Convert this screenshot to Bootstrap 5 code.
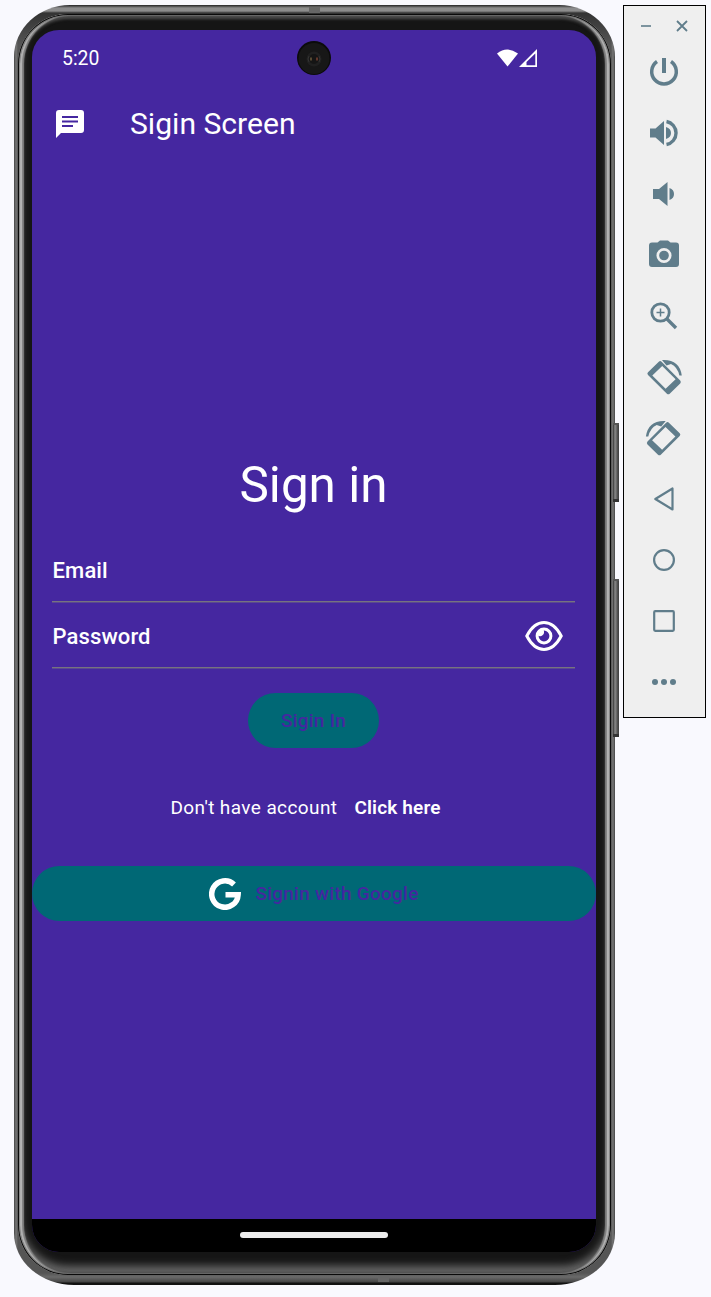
<!DOCTYPE html>
<html lang="en">
<head>
<meta charset="utf-8">
<meta name="viewport" content="width=device-width, initial-scale=1">
<title>Sign in</title>
<link href="https://cdn.jsdelivr.net/npm/bootstrap@5.3.0/dist/css/bootstrap.min.css" rel="stylesheet">
<style>
body{background:#f9f9fe;font-family:Roboto,sans-serif;width:711px;height:1297px;overflow:hidden}
.stage{padding:5px 5px 0 14px;gap:8px}
.phone{width:601px;height:1280px;padding:9px 4px 10px;border-radius:56px 56px 60px 60px / 52px 52px 52px 52px;flex:none;
 background:linear-gradient(#222 0,#444 1px,#8c8c8c 3px,#8c8c8c 6px,#333 8px,transparent 40px,transparent 1240px,#555 1268px,#6a6a6a 1272px,#444 1277px,#111 1278px),linear-gradient(90deg,#444 0,#777 2px,#555 4px,#555 597px,#777 599px,#444 601px)}
.glass{height:1261px;border-radius:50px;padding:16px 15px 17px 14px;background:#151515;
 box-shadow:inset 0 0 0 1px #0a0a0a,inset 1px 0 0 1px #888,inset -1px 0 0 1px #888,inset 0 0 1px 2px #666,inset 3px 0 1px 1px #b8b8b8,inset -3px 0 1px 1px #b8b8b8,inset 5px 0 1px 1px #808080,inset -5px 0 1px 1px #808080,inset 0 1px 3px 4px #4a4a4a,inset 0 -6px 8px 3px #6a6a6a}
.screen{height:1222px;border-radius:27px;background:#4527a0;color:#fff;overflow:hidden}
.side-key{position:absolute;left:599px;width:5.5px;background:linear-gradient(90deg,#333 0,#888 2px,#777 3px,#444 5px);border-top:2px solid #555;border-bottom:3px solid #333}
.notch{position:absolute;width:11px;height:6px;background:#666}
.statusbar{height:56px;padding:2px 59px 0 30px;font-size:19.4px}
.lens{position:absolute;left:265px;top:11px}
.titlebar{height:76px;padding-left:24px;gap:46px}
.titlebar h1{font-size:30.1px;font-weight:400;line-height:36px}
.form-area{padding:293px 21px 0 20px}
.heading{font-size:49.4px;font-weight:400;line-height:60px;height:60px}
.field{height:66px;border-bottom:1px solid #77737f;box-shadow:0 1px 0 #5b4990;font-size:22px;font-weight:500;padding:2px 0 0 .6px;letter-spacing:.1px}
.pill{background:#006875;color:#4527a0;height:55px;border-radius:28px;font-size:19px;font-weight:500;letter-spacing:.25px;border:0;padding-top:3px}
.pill-sm{width:131px;margin-top:25px}
.signup{font-size:19px;margin-top:48px;height:24px;line-height:24px;gap:17px;padding-right:16px;letter-spacing:.4px}
.signup a{font-weight:600;letter-spacing:.15px}
.google{margin-top:46px;gap:14px;padding-top:1px}
.google span{padding-top:2px}
.homebar{height:33px;background:#000;padding:0 1px 2px 0}
.homebar span{width:148px;height:6px;border-radius:3px;background:#ececec}
.tools{width:83px;height:713px;background:#efefef;border:1px solid #000;padding:1px 2px 0 0;color:#607d8b}
.tools svg{display:block}
.wincontrols{height:38px;gap:24px}
.tool{height:61px;width:79px;background:none;border:0;padding:0;color:inherit}
</style>
</head>
<body>
<main class="stage d-flex align-items-start">
 <section class="phone position-relative">
  <i class="side-key" style="top:418px;height:79px"></i>
  <i class="side-key" style="top:574px;height:158px"></i>
  <i class="notch" style="left:295px;top:2px"></i>
  <i class="notch" style="left:364px;top:1271px"></i>
  <div class="glass">
   <div class="screen d-flex flex-column position-relative">
    <div class="statusbar d-flex justify-content-between align-items-center">
     <span>5:20</span>
     <svg width="40" height="18" viewBox="0 0 40 18" fill="#fff" style="margin-top:-2px"><path d="M0 4.500Q10 -3.500 21 4.500L10.500 17.500Z"/><path fill-rule="evenodd" d="M40 0V18H22ZM38.300 4.500L29.500 13V16.300H38.300Z"/></svg>
    </div>
    <svg class="lens" width="34" height="34" viewBox="0 0 34 34"><circle cx="17" cy="17" r="17" fill="#0b0b0b"/><circle cx="17" cy="17.500" r="15.500" fill="#171717"/><circle cx="17" cy="18" r="7.500" fill="#202020"/><circle cx="17" cy="18" r="5" fill="#151515"/><path d="M12 15q-2 3 0 6M22 15q2 3 0 6" stroke="#333" fill="none"/><path d="M14 16.500v3" stroke="#9a8050"/><path d="M20 16.500v3" stroke="#b05840"/></svg>
    <header class="titlebar d-flex align-items-center">
     <svg width="28" height="28" viewBox="0 0 28 28"><path fill="#fff" d="M3 0H25Q28 0 28 3V20Q28 23 25 23H5L0 28V3Q0 0 3 0Z"/><path d="M6 7H22M6 11.500H22M6 16H17" stroke="#4527a0" stroke-width="2.200"/></svg>
     <h1 class="mb-0">Sigin Screen</h1>
    </header>
    <div class="form-area">
     <h2 class="heading mb-0 text-center">Sign in</h2>
     <div class="field d-flex align-items-center" style="margin-top:24px;height:63px;padding-top:0">Email</div>
     <div class="field d-flex align-items-center justify-content-between"><span style="padding-top:2px">Password</span>
      <svg width="38" height="30" viewBox="0 0 38 30" fill="none" stroke="#fff" style="margin:1px 12px 0 0"><path stroke-width="3" d="M1.800 15C6 7 12 1.600 19 1.600S32 7 36.200 15C32 23 26 28.400 19 28.400S6 23 1.800 15Z"/><circle cx="19" cy="15" r="6.900" stroke-width="3"/><path fill="#fff" stroke="none" d="M12.500 10L18.500 8.500Q20 12.500 17.500 14.300Q15 16.300 12.500 14Z"/></svg>
     </div>
     <button class="pill pill-sm d-block mx-auto">Sigin In</button>
     <div class="signup d-flex justify-content-center"><span>Don't have account</span><a class="text-white text-decoration-none">Click here</a></div>
    </div>
    <button class="pill google w-100 d-flex align-items-center justify-content-center">
     <svg width="32" height="32" viewBox="0 0 32 32" fill="none" stroke="#fff" stroke-width="5.500"><path d="M25 6.500A13.200 13.200 0 1 0 29.100 16.800H16.500"/></svg>
     <span>Signin with Google</span>
    </button>
    <footer class="homebar mt-auto d-flex justify-content-center align-items-center"><span></span></footer>
   </div>
  </div>
 </section>
 <aside class="tools">
  <div class="wincontrols d-flex justify-content-center align-items-center">
   <svg width="12" height="12" stroke="currentColor" stroke-width="1.600"><path d="M1 6H11"/></svg>
   <svg width="12" height="12" stroke="currentColor" stroke-width="1.800"><path d="M1 1L11 11M11 1L1 11"/></svg>
  </div>
  <div id="toolList" style="margin-top:-4px"></div>
 </aside>
</main>
<script>
const turned='<path fill="currentColor" fill-rule="evenodd" d="M3 14.300L13.800 3.700Q15.200 2.500 16.600 3.800L35.200 22.400Q36.500 23.900 35.200 25.400L24.700 35.700Q23.300 37 21.900 35.700L3 17Q1.700 15.500 3 14.300ZM7.300 17.400L20.600 30.700L30.600 21.200L17.200 7.900Z"/><path fill="currentColor" d="M17 2Q34.500 1 36.800 17.500H34.400Q32.500 9 26 6L21.500 7.500Z"/>';
const icons=[
 '<path d="M19 5V20" stroke-width="4"/><path d="M12 8.500A12.300 12.300 0 1 0 26 8.500" stroke-width="3.500"/>',
 '<path fill="currentColor" stroke="none" d="M5 14.500H10.500L19 7V31L10.500 23.500H5ZM21 13Q26 14.500 26 19T21 25Z"/><path d="M21.500 7.500A11.700 11.700 0 0 1 21.500 30.500" stroke-width="3.400"/>',
 '<path fill="currentColor" stroke="none" d="M8 14H14L22.500 7V31L14 24H8ZM24.500 13Q29 14.500 29 19T24.500 25Z"/>',
 '<path fill="currentColor" stroke="none" d="M7 6.500H12.500L15 4.500H23L25.500 6.500H31Q34 6.500 34 9.500V28Q34 31 31 31H7Q4 31 4 28V9.500Q4 6.500 7 6.500Z"/><circle cx="19" cy="19.500" r="6.200" stroke="#efefef" stroke-width="2.700"/>',
 '<circle cx="15.500" cy="15.500" r="8.700" stroke-width="2.800"/><path d="M11.500 15.500H19.500M15.500 11.500V19.500" stroke-width="1.500"/><path d="M21.500 21.500L31 31" stroke-width="3.400"/>',
 '<g stroke="none">'+turned+'</g>',
 '<g stroke="none" transform="translate(37.700 0) scale(-1 1)">'+turned+'</g>',
 '<path d="M27.500 8.500V29.500L10.300 19Z" stroke-width="2.200" stroke-linejoin="round"/>',
 '<circle cx="19" cy="19" r="9.900" stroke-width="2.200"/>',
 '<rect x="9.200" y="9.200" width="19.600" height="19.600" rx="1" stroke-width="2.200"/>',
 '<g fill="currentColor" stroke="none"><circle cx="10" cy="19" r="3"/><circle cx="19" cy="19" r="3"/><circle cx="28" cy="19" r="3"/></g>'];
document.getElementById('toolList').innerHTML=icons.map(p=>'<button class="tool d-flex align-items-center justify-content-center"><svg width="38" height="38" viewBox="0 0 38 38" fill="none" stroke="currentColor">'+p+'</svg></button>').join('');
</script>
<script src="https://cdn.jsdelivr.net/npm/bootstrap@5.3.0/dist/js/bootstrap.bundle.min.js"></script>
</body>
</html>
